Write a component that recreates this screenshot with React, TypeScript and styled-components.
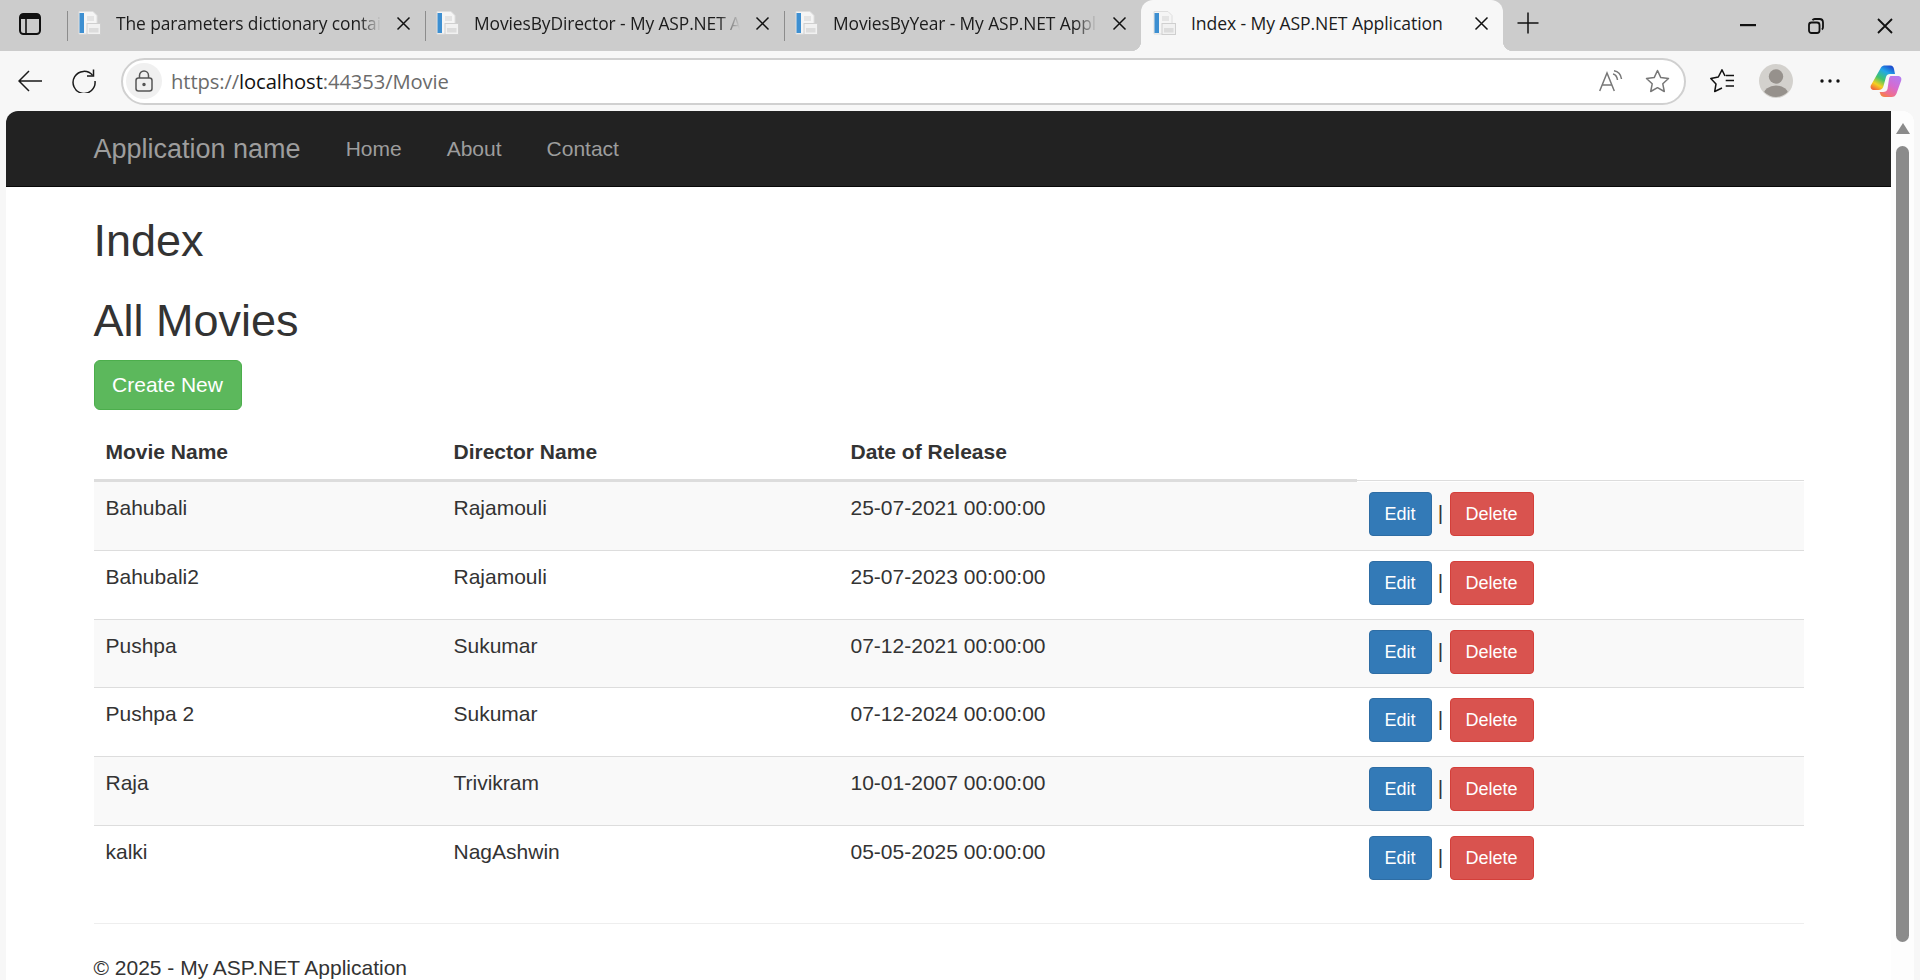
import styled, { createGlobalStyle } from 'styled-components';

const GlobalStyle = createGlobalStyle`
  html, body {
    margin: 0;
    padding: 0;
    height: 100%;
    overflow: hidden;
    background: #f7f7f7;
  }
  * {
    box-sizing: border-box;
  }
`;

const Window = styled.div`
  display: flex;
  flex-direction: column;
  width: 1920px;
  height: 980px;
  overflow: hidden;
  background: #f7f7f7;
  font-family: 'Liberation Sans', Arial, sans-serif;
`;

const TabStrip = styled.div`
  display: flex;
  align-items: stretch;
  height: 51px;
  flex: none;
  background: #cccccc;
`;

const PanelButton = styled.div`
  display: flex;
  align-items: center;
  justify-content: center;
  width: 67px;
  padding: 0 7px 3px 0;
`;

const TabSep = styled.div`
  align-self: center;
  width: 1px;
  height: 30px;
  flex: none;
  background: #8c8c8c;
`;

const Tab = styled.div<{ $width: number; $active?: boolean }>`
  position: relative;
  display: flex;
  align-items: center;
  gap: 15px;
  width: ${(p) => p.$width}px;
  flex: none;
  padding: 0 14px 5px 10px;
  background: ${(p) => (p.$active ? '#f7f7f7' : 'transparent')};
  border-radius: ${(p) => (p.$active ? '12px 12px 0 0' : '0')};
  padding-left: ${(p) => (p.$active ? '12px' : '10px')};

  ${(p) =>
    p.$active &&
    `
    &::before, &::after {
      content: '';
      position: absolute;
      bottom: 0;
      width: 10px;
      height: 10px;
    }
    &::before {
      left: -10px;
      background: radial-gradient(circle at 0 0, transparent 10px, #f7f7f7 10.5px);
    }
    &::after {
      right: -10px;
      background: radial-gradient(circle at 100% 0, transparent 10px, #f7f7f7 10.5px);
    }
  `}
`;

const TabTitle = styled.span<{ $fade?: boolean }>`
  flex: 1;
  min-width: 0;
  overflow: hidden;
  white-space: nowrap;
  font-family: 'Open Sans', 'Noto Sans', sans-serif;
  font-size: ${(p) => (p.$fade ? '17.4px' : '17.6px')};
  letter-spacing: -0.1px;
  color: #1c1c1c;
  ${(p) =>
    p.$fade &&
    `
    -webkit-mask-image: linear-gradient(to right, #000 calc(100% - 22px), transparent);
    mask-image: linear-gradient(to right, #000 calc(100% - 22px), transparent);
  `}
`;

const IconCell = styled.div<{ $width: number; $lift?: number }>`
  display: flex;
  align-items: center;
  justify-content: center;
  width: ${(p) => p.$width}px;
  padding-bottom: ${(p) => p.$lift ?? 0}px;
  flex: none;
`;

const StripSpacer = styled.div`
  flex: 1;
`;

const Toolbar = styled.div`
  display: flex;
  align-items: center;
  height: 60px;
  flex: none;
  padding: 0 6px 0 3px;
`;

const ToolButton = styled.div<{ $width?: number }>`
  display: flex;
  align-items: center;
  justify-content: center;
  width: ${(p) => p.$width ?? 54}px;
  height: 46px;
  flex: none;
`;

const AddressBar = styled.div`
  display: flex;
  align-items: center;
  flex: 1;
  height: 47px;
  margin: 0 9px 0 10px;
  padding: 0 3px 0 3px;
  background: #ffffff;
  border: 2px solid #d0d0d0;
  border-radius: 24px;
`;

const LockPill = styled.div`
  display: flex;
  align-items: center;
  justify-content: center;
  width: 36px;
  height: 36px;
  flex: none;
  border-radius: 50%;
  background: #f0f0f0;
`;

const UrlText = styled.div`
  flex: 1;
  margin-left: 9px;
  font-family: 'Open Sans', 'Noto Sans', sans-serif;
  font-size: 20.2px;
  letter-spacing: -0.1px;
  color: #6b6b6b;

  b {
    font-weight: 400;
    color: #111111;
  }
`;

const AddressIcon = styled.div`
  display: flex;
  align-items: center;
  justify-content: center;
  width: 47px;
  flex: none;
`;

const Viewport = styled.div`
  display: flex;
  flex: 1;
  min-height: 0;
  margin: 0 6px;
  background: #ffffff;
  border-radius: 12px 12px 0 0;
  overflow: hidden;
`;

const Page = styled.div`
  flex: 1;
  min-width: 0;
  background: #ffffff;
  color: #333333;
  font-size: 21px;
  line-height: 30px;
`;

const Navbar = styled.nav`
  display: flex;
  align-items: center;
  height: 76px;
  padding: 0 87.5px;
  background: #222222;
  border-bottom: 1px solid #080808;
`;

const Brand = styled.a`
  margin-right: 22.5px;
  font-size: 27px;
  color: #9d9d9d;
`;

const NavLink = styled.a`
  padding: 0 22.5px;
  font-size: 21px;
  color: #9d9d9d;
`;

const Container = styled.div`
  padding: 0 87.5px;
`;

const Heading = styled.h2`
  margin: 29px 0 15px;
  font-size: 45px;
  font-weight: 500;
  line-height: 49.5px;
  color: #333333;

  & + & {
    margin-top: 30px;
  }
`;

const BaseButton = styled.a`
  display: inline-flex;
  align-items: center;
  justify-content: center;
  color: #ffffff;
  border-style: solid;
  border-width: 1px;
`;

const CreateButton = styled(BaseButton)`
  width: 148px;
  height: 50px;
  margin-bottom: 15px;
  font-size: 21px;
  background: #5cb85c;
  border-color: #4cae4c;
  border-radius: 6px;
`;

const SmallButton = styled(BaseButton)<{ $kind: 'edit' | 'delete' }>`
  height: 44px;
  width: ${(p) => (p.$kind === 'edit' ? 63 : 84)}px;
  font-size: 18px;
  border-radius: 4px;
  background: ${(p) => (p.$kind === 'edit' ? '#337ab7' : '#d9534f')};
  border-color: ${(p) => (p.$kind === 'edit' ? '#2e6da4' : '#d43f3a')};
`;

const Table = styled.table`
  width: 100%;
  table-layout: fixed;
  border-collapse: separate;
  border-spacing: 0;
`;

const HeadCell = styled.th<{ $width?: number; $blank?: boolean }>`
  width: ${(p) => (p.$width ? `${p.$width}px` : 'auto')};
  height: 57px;
  padding: 12px;
  text-align: left;
  font-weight: 700;
  border-bottom: ${(p) => (p.$blank ? '0' : '3px solid #dddddd')};
  background: ${(p) =>
    p.$blank
      ? 'linear-gradient(#dddddd, #dddddd) left bottom 1px / 100% 1px no-repeat'
      : 'none'};
`;

const BodyRow = styled.tr<{ $striped: boolean }>`
  background: ${(p) => (p.$striped ? '#f9f9f9' : '#ffffff')};
`;

const BodyCell = styled.td<{ $last: boolean }>`
  height: 68.8px;
  padding: 11px 12px 12px;
  vertical-align: top;
  border-bottom: ${(p) => (p.$last ? '0' : '1px solid #dddddd')};
`;

const Actions = styled.div`
  display: flex;
  align-items: center;
  margin-top: -1px;
`;

const Pipe = styled.span`
  width: 18px;
  text-align: center;
  margin-top: -2px;
`;

const FooterRule = styled.hr`
  height: 1px;
  margin: 28px 0 29px;
  border: 0;
  background: #eeeeee;
`;

const FooterText = styled.p`
  margin: 0;
`;

const ScrollTrack = styled.div`
  width: 23px;
  flex: none;
  background: #fdfdfd;
`;

const ScrollArrow = styled.div`
  width: 0;
  height: 0;
  margin: 12px auto 0;
  border-left: 7px solid transparent;
  border-right: 7px solid transparent;
  border-bottom: 11px solid #8b8b8b;
`;

const ScrollThumb = styled.div`
  width: 13px;
  height: 796px;
  margin: 12px auto 0;
  background: #8b8b8b;
  border-radius: 7px;
`;

const Favicon = () => (
  <svg width="23" height="24" viewBox="0 0 23 24">
    <path d="M1 0.5H15L19 4.5V23H1Z" fill="#f5f5f5" stroke="#dedede" />
    <rect x="1.5" y="2" width="4.5" height="20" fill="#3d8fd1" />
    <rect x="9" y="5" width="7" height="5" fill="#e4e4e4" />
    <rect x="9" y="12.5" width="13.5" height="11" fill="#f1f1f1" stroke="#cfcfcf" />
    <rect x="11" y="17" width="9.5" height="4.5" fill="#dcdcdc" />
  </svg>
);

const CloseGlyph = ({ size = 15 }: { size?: number }) => (
  <svg width={size} height={size} viewBox="0 0 15 15">
    <path d="M1.5 1.5L13.5 13.5M13.5 1.5L1.5 13.5" stroke="#111111" strokeWidth="1.5" fill="none" />
  </svg>
);

const Copilot = () => (
  <svg width="32" height="33" viewBox="0 0 32 33">
    <defs>
      <linearGradient id="copilotLeft" x1="0.75" y1="0" x2="0.2" y2="1">
        <stop offset="0" stopColor="#1d4fd0" />
        <stop offset="0.25" stopColor="#22a7e8" />
        <stop offset="0.55" stopColor="#42c46a" />
        <stop offset="0.8" stopColor="#f5d020" />
        <stop offset="1" stopColor="#f26b3a" />
      </linearGradient>
      <linearGradient id="copilotRight" x1="0.8" y1="0" x2="0.2" y2="1">
        <stop offset="0" stopColor="#b57bf0" />
        <stop offset="0.45" stopColor="#d56bd0" />
        <stop offset="0.8" stopColor="#f0708a" />
        <stop offset="1" stopColor="#f5813f" />
      </linearGradient>
    </defs>
    <path
      d="M11 2.5C12 1 13.5 0.5 15 0.5H20.5C22.5 0.5 23.5 2 24 4L25 9H20C18 9 16.5 10 16 12L13.5 21C13 23.5 11 25 8.5 25H4C1.5 25 0 23 0.8 20.5Z"
      fill="url(#copilotLeft)"
    />
    <path
      d="M20.5 11H27.5C30.5 11 32 13 31.2 15.5L26.5 28.5C25.5 31 24 32 21.5 32H15C12 32 10.5 30.5 10 28L9.5 27H13C15.5 27 17 26 17.5 24L19 14C19.2 12.5 19.8 11.5 20.5 11Z"
      fill="url(#copilotRight)"
    />
  </svg>
);

const movies = [
  { name: 'Bahubali', director: 'Rajamouli', date: '25-07-2021 00:00:00' },
  { name: 'Bahubali2', director: 'Rajamouli', date: '25-07-2023 00:00:00' },
  { name: 'Pushpa', director: 'Sukumar', date: '07-12-2021 00:00:00' },
  { name: 'Pushpa 2', director: 'Sukumar', date: '07-12-2024 00:00:00' },
  { name: 'Raja', director: 'Trivikram', date: '10-01-2007 00:00:00' },
  { name: 'kalki', director: 'NagAshwin', date: '05-05-2025 00:00:00' },
];

const tabs = [
  { title: 'The parameters dictionary contains a null entry', width: 357 },
  { title: 'MoviesByDirector - My ASP.NET Application', width: 358 },
  { title: 'MoviesByYear - My ASP.NET Application', width: 356 },
];

export default function App() {
  return (
    <Window>
      <GlobalStyle />
      <TabStrip>
        <PanelButton>
          <svg width="22" height="22" viewBox="0 0 22 22" fill="none">
            <rect x="1" y="1" width="20" height="20" rx="3.5" stroke="#111111" strokeWidth="2" />
            <path d="M1 3.5C1 2 2 1 4 1H18C20 1 21 2 21 3.5V6H1Z" fill="#111111" />
            <path d="M7 6V21" stroke="#111111" strokeWidth="1.6" />
          </svg>
        </PanelButton>
        {tabs.map((tab) => (
          <div key={tab.title} style={{ display: 'contents' }}>
            <TabSep />
            <Tab $width={tab.width}>
              <Favicon />
              <TabTitle $fade>{tab.title}</TabTitle>
              <CloseGlyph />
            </Tab>
          </div>
        ))}
        <Tab $width={362} $active>
          <Favicon />
          <TabTitle>Index - My ASP.NET Application</TabTitle>
          <CloseGlyph />
        </Tab>
        <IconCell $width={50} $lift={5}>
          <svg width="22" height="22" viewBox="0 0 22 22">
            <path d="M11 0.5V21.5M0.5 11H21.5" stroke="#111111" strokeWidth="1.5" />
          </svg>
        </IconCell>
        <StripSpacer />
        <IconCell $width={68}>
          <svg width="16" height="3" viewBox="0 0 16 3">
            <rect width="16" height="2.2" fill="#111111" />
          </svg>
        </IconCell>
        <IconCell $width={68}>
          <svg width="16" height="16" viewBox="0 0 16 16" fill="none" stroke="#111111" strokeWidth="1.8">
            <rect x="1" y="4.5" width="10.5" height="10.5" rx="2.5" />
            <path d="M4.5 2.2C5 1.4 5.8 1 6.8 1H11.5C13.5 1 15 2.5 15 4.5V9.2C15 10.2 14.6 11 13.8 11.5" />
          </svg>
        </IconCell>
        <IconCell $width={70}>
          <svg width="16" height="16" viewBox="0 0 16 16">
            <path d="M1 1L15 15M15 1L1 15" stroke="#111111" strokeWidth="1.8" />
          </svg>
        </IconCell>
      </TabStrip>

      <Toolbar>
        <ToolButton>
          <svg width="24" height="22" viewBox="0 0 24 22" fill="none" stroke="#1a1a1a" strokeWidth="1.5">
            <path d="M24 11H1.5M11 1L1 11L11 21" />
          </svg>
        </ToolButton>
        <ToolButton>
          <svg width="24" height="24" viewBox="0 0 24 24" fill="none" stroke="#1a1a1a" strokeWidth="1.5">
            <path d="M20.6 6.4A11 11 0 1 0 23 12" />
            <path d="M21.5 0.5V7H15" />
          </svg>
        </ToolButton>
        <AddressBar>
          <LockPill>
            <svg width="18" height="22" viewBox="0 0 18 22" fill="none" stroke="#555555" strokeWidth="1.5">
              <rect x="1" y="8" width="16" height="13" rx="2.5" />
              <path d="M4.5 8V5.5A4.5 4.5 0 0 1 13.5 5.5V8" />
              <circle cx="9" cy="14.5" r="1" fill="#555555" />
            </svg>
          </LockPill>
          <UrlText>
            https://<b>localhost</b>:44353/Movie
          </UrlText>
          <AddressIcon>
            <svg width="24" height="22" viewBox="0 0 24 22" fill="none" stroke="#777777" strokeWidth="1.5">
              <path d="M0.7 21L8 3L15.3 21M3.2 15H12.8" />
              <path d="M14 4C16.5 4.5 18 6.5 18.5 10M15 0.8C19 1.3 21.8 4.5 22.5 9" />
            </svg>
          </AddressIcon>
          <AddressIcon>
            <svg width="25" height="24" viewBox="0 0 25 24" fill="none" stroke="#777777" strokeWidth="1.5">
              <path d="M12.5 1.5L15.8 8.6L23.5 9.5L17.8 14.8L19.3 22.5L12.5 18.7L5.7 22.5L7.2 14.8L1.5 9.5L9.2 8.6Z" strokeLinejoin="round" />
            </svg>
          </AddressIcon>
        </AddressBar>
        <ToolButton>
          <svg width="25" height="24" viewBox="0 0 25 24" fill="none" stroke="#111111" strokeWidth="1.5">
            <path d="M15 7L12 0.8L8.3 8L0.8 9.5L6 15L4.7 22.5L12 19" strokeLinejoin="round" />
            <path d="M15.7 6.5H24M15.7 11.5H24M15.7 17H24" />
          </svg>
        </ToolButton>
        <ToolButton>
          <svg width="34" height="34" viewBox="0 0 34 34">
            <defs>
              <clipPath id="avatarClip">
                <circle cx="17" cy="17" r="16" />
              </clipPath>
            </defs>
            <circle cx="17" cy="17" r="17" fill="#d3d1cd" />
            <g clipPath="url(#avatarClip)" fill="#96918c">
              <circle cx="17" cy="12.5" r="7.2" />
              <ellipse cx="17" cy="31" rx="12.5" ry="9.5" />
            </g>
          </svg>
        </ToolButton>
        <ToolButton>
          <svg width="20" height="4" viewBox="0 0 20 4" fill="#111111">
            <circle cx="2" cy="2" r="1.7" />
            <circle cx="10" cy="2" r="1.7" />
            <circle cx="18" cy="2" r="1.7" />
          </svg>
        </ToolButton>
        <ToolButton $width={57}>
          <Copilot />
        </ToolButton>
      </Toolbar>

      <Viewport>
        <Page>
          <Navbar>
            <Brand>Application name</Brand>
            <NavLink>Home</NavLink>
            <NavLink>About</NavLink>
            <NavLink>Contact</NavLink>
          </Navbar>
          <Container>
            <Heading>Index</Heading>
            <Heading>All Movies</Heading>
            <CreateButton>Create New</CreateButton>
            <Table>
              <thead>
                <tr>
                  <HeadCell $width={348}>Movie Name</HeadCell>
                  <HeadCell $width={397}>Director Name</HeadCell>
                  <HeadCell $width={518}>Date of Release</HeadCell>
                  <HeadCell $blank />
                </tr>
              </thead>
              <tbody>
                {movies.map((movie, i) => {
                  const last = i === movies.length - 1;
                  return (
                    <BodyRow key={movie.name} $striped={i % 2 === 0}>
                      <BodyCell $last={last}>{movie.name}</BodyCell>
                      <BodyCell $last={last}>{movie.director}</BodyCell>
                      <BodyCell $last={last}>{movie.date}</BodyCell>
                      <BodyCell $last={last}>
                        <Actions>
                          <SmallButton $kind="edit">Edit</SmallButton>
                          <Pipe>|</Pipe>
                          <SmallButton $kind="delete">Delete</SmallButton>
                        </Actions>
                      </BodyCell>
                    </BodyRow>
                  );
                })}
              </tbody>
            </Table>
            <FooterRule />
            <FooterText>© 2025 - My ASP.NET Application</FooterText>
          </Container>
        </Page>
        <ScrollTrack>
          <ScrollArrow />
          <ScrollThumb />
        </ScrollTrack>
      </Viewport>
    </Window>
  );
}
